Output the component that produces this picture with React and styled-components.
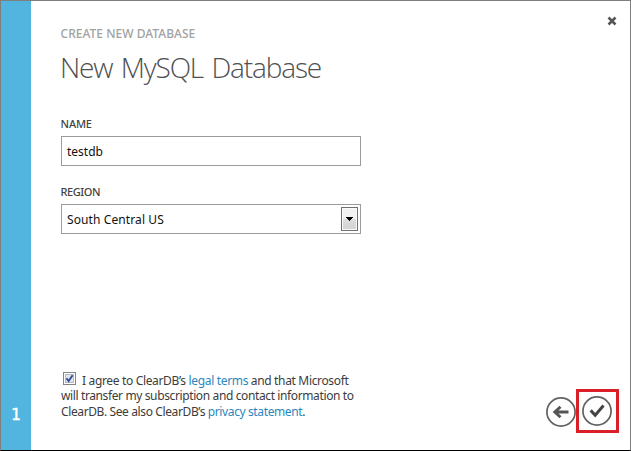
import React from 'react';
import styled, { createGlobalStyle } from 'styled-components';

const Global = createGlobalStyle`
  * { box-sizing: border-box; }
  body { margin: 0; background: #fff; font-family: "Noto Sans", "Open Sans", sans-serif; }
`;
const Dialog = styled.main`
  display: flex;
  width: 631px;
  height: 451px;
  background: #fff;
  border: 1px solid #7f7f7f;
  border-bottom-color: #000;
`;
const StepRail = styled.aside`
  display: flex;
  width: 30px;
  flex: none;
  align-items: flex-end;
  justify-content: center;
  padding-bottom: 25px;
  background: #52b5e0;
  color: #fff;
  font: 400 15px/20px "DejaVu Sans", sans-serif;
  -webkit-text-stroke: 0.5px #fff;
`;
const Content = styled.div`
  display: flex;
  flex: 1;
  flex-direction: column;
  padding: 0 11px 0 30px;
`;
const Header = styled.header`
  display: flex;
  justify-content: space-between;
  height: 93px;
  padding-top: 14px;
`;
const Eyebrow = styled.div`
  margin-top: 10px;
  margin-left: -0.5px;
  color: #a2a2a2;
  font-size: 12px;
  font-weight: 500;
  line-height: 17px;
  letter-spacing: 0.03px;
  white-space: nowrap;
`;
const Title = styled.h1`
  margin: 7px 0 0 -1px;
  color: #505050;
  font: 300 28px/36px "Open Sans", sans-serif;
  letter-spacing: -1.15px;
  word-spacing: 2.3px;
  white-space: nowrap;
`;
const Close = styled.button`
  display: flex;
  width: 10px;
  height: 12px;
  margin-right: 2px;
  padding: 1px 0 0;
  border: 0;
  background: none;
`;
const Field = styled.label`
  display: block;
  width: 300px;
  height: 68px;
  padding-top: 22px;
`;
const Label = styled.div`
  height: 20px;
  margin-left: -0.4px;
  color: #444;
  font-size: 11px;
  font-weight: 500;
  line-height: 16px;
  letter-spacing: ${(p) => p.$spacing};
`;
const Control = styled.div`
  display: flex;
  align-items: center;
  justify-content: space-between;
  height: 30px;
  padding: 0 2px 0 5px;
  border: 1px solid #9b9b9b;
  color: #111;
  font-size: 12px;
  letter-spacing: ${(p) => p.$spacing};
`;
const Arrow = styled.span`
  display: flex;
  width: 17px;
  height: 24px;
  align-items: center;
  justify-content: center;
  border: 1px solid #707070;
  box-shadow: inset 0 0 0 1px #fafafa;
  background: linear-gradient(#f2f2f2 50%, #dedede 50%, #d2d2d2);
`;
const Footer = styled.footer`
  display: flex;
  justify-content: space-between;
  margin-top: auto;
  height: 80px;
`;
const Agreement = styled.div`
  padding-top: 3px;
  color: #3c3c3c;
  font-size: 12px;
  white-space: nowrap;
`;
const Line = styled.div`
  display: flex;
  align-items: center;
  height: 15.5px;
  line-height: 16px;
  letter-spacing: ${(p) => p.$spacing};
  white-space: pre;
`;
const Check = styled.svg`
  margin: -4px 6px 0 2px;
`;
const Link = styled.a`
  color: #2b87bd;
`;
const Actions = styled.div`
  display: flex;
  align-items: flex-start;
  padding-top: 19px;
`;
const BackButton = styled.button`
  display: flex;
  margin-top: 8px;
  padding: 0;
  border: 0;
  background: none;
`;
const ConfirmButton = styled.button`
  display: flex;
  align-items: center;
  justify-content: center;
  width: 43px;
  height: 44px;
  padding: 0 1px 1px 0;
  border: 3px solid #da1f28;
  background: none;
`;

export default function App() {
  return (
    <>
      <Global />
      <Dialog>
        <StepRail>1</StepRail>
        <Content>
          <Header>
            <div>
              <Eyebrow>CREATE NEW DATABASE</Eyebrow>
              <Title>New MySQL Database</Title>
            </div>
            <Close aria-label="Close">
              <svg width="10" height="10" viewBox="0 0 10 10">
                <path d="M1.5 1.5 8.5 8.5M8.5 1.5 1.5 8.5" stroke="#555" strokeWidth="2.5" />
              </svg>
            </Close>
          </Header>
          <Field>
            <Label $spacing="-0.2px">NAME</Label>
            <Control $spacing="0">testdb</Control>
          </Field>
          <Field>
            <Label $spacing="-0.45px">REGION</Label>
            <Control $spacing="0.1px">
              South Central US
              <Arrow>
                <svg width="7" height="4" viewBox="0 0 7 4" shapeRendering="crispEdges">
                  <path d="M0 0H7V1H6V2H5V3H4V4H3V3H2V2H1V1H0Z" fill="#000" />
                </svg>
              </Arrow>
            </Control>
          </Field>
          <Footer>
            <Agreement>
              <Line $spacing="-0.34px">
                <Check width="13" height="13" viewBox="0 0 13 13">
                  <rect x=".5" y=".5" width="12" height="12" fill="#fff" stroke="#858585" />
                  <rect x="2.5" y="2.5" width="8" height="8" fill="#e3e7ed" stroke="#b4bac3" />
                  <path d="M3.5 6.2 5.6 9 9.6 3.2" fill="none" stroke="#354f96" strokeWidth="1.9" />
                </Check>
                I agree to ClearDB’s <Link>legal terms</Link> and that Microsoft
              </Line>
              <Line $spacing="-0.38px">will transfer my subscription and contact information to</Line>
              <Line $spacing="-0.38px">
                ClearDB. See also ClearDB’s <Link>privacy statement</Link>.
              </Line>
            </Agreement>
            <Actions>
              <BackButton aria-label="Back">
                <svg width="30" height="30" viewBox="0 0 30 30">
                  <circle cx="15" cy="15" r="14.1" fill="none" stroke="#626262" strokeWidth="1.7" />
                  <path d="M22.5 15H9M14.5 9.7 8.8 15l5.7 5.3" fill="none" stroke="#555" strokeWidth="2.9" />
                </svg>
              </BackButton>
              <ConfirmButton aria-label="Complete">
                <svg width="30" height="30" viewBox="0 0 30 30">
                  <circle cx="15" cy="15" r="14.1" fill="none" stroke="#626262" strokeWidth="1.7" />
                  <path d="M8.7 14.4 13.2 19.2 21.5 9.5" fill="none" stroke="#444" strokeWidth="3" />
                </svg>
              </ConfirmButton>
            </Actions>
          </Footer>
        </Content>
      </Dialog>
    </>
  );
}
